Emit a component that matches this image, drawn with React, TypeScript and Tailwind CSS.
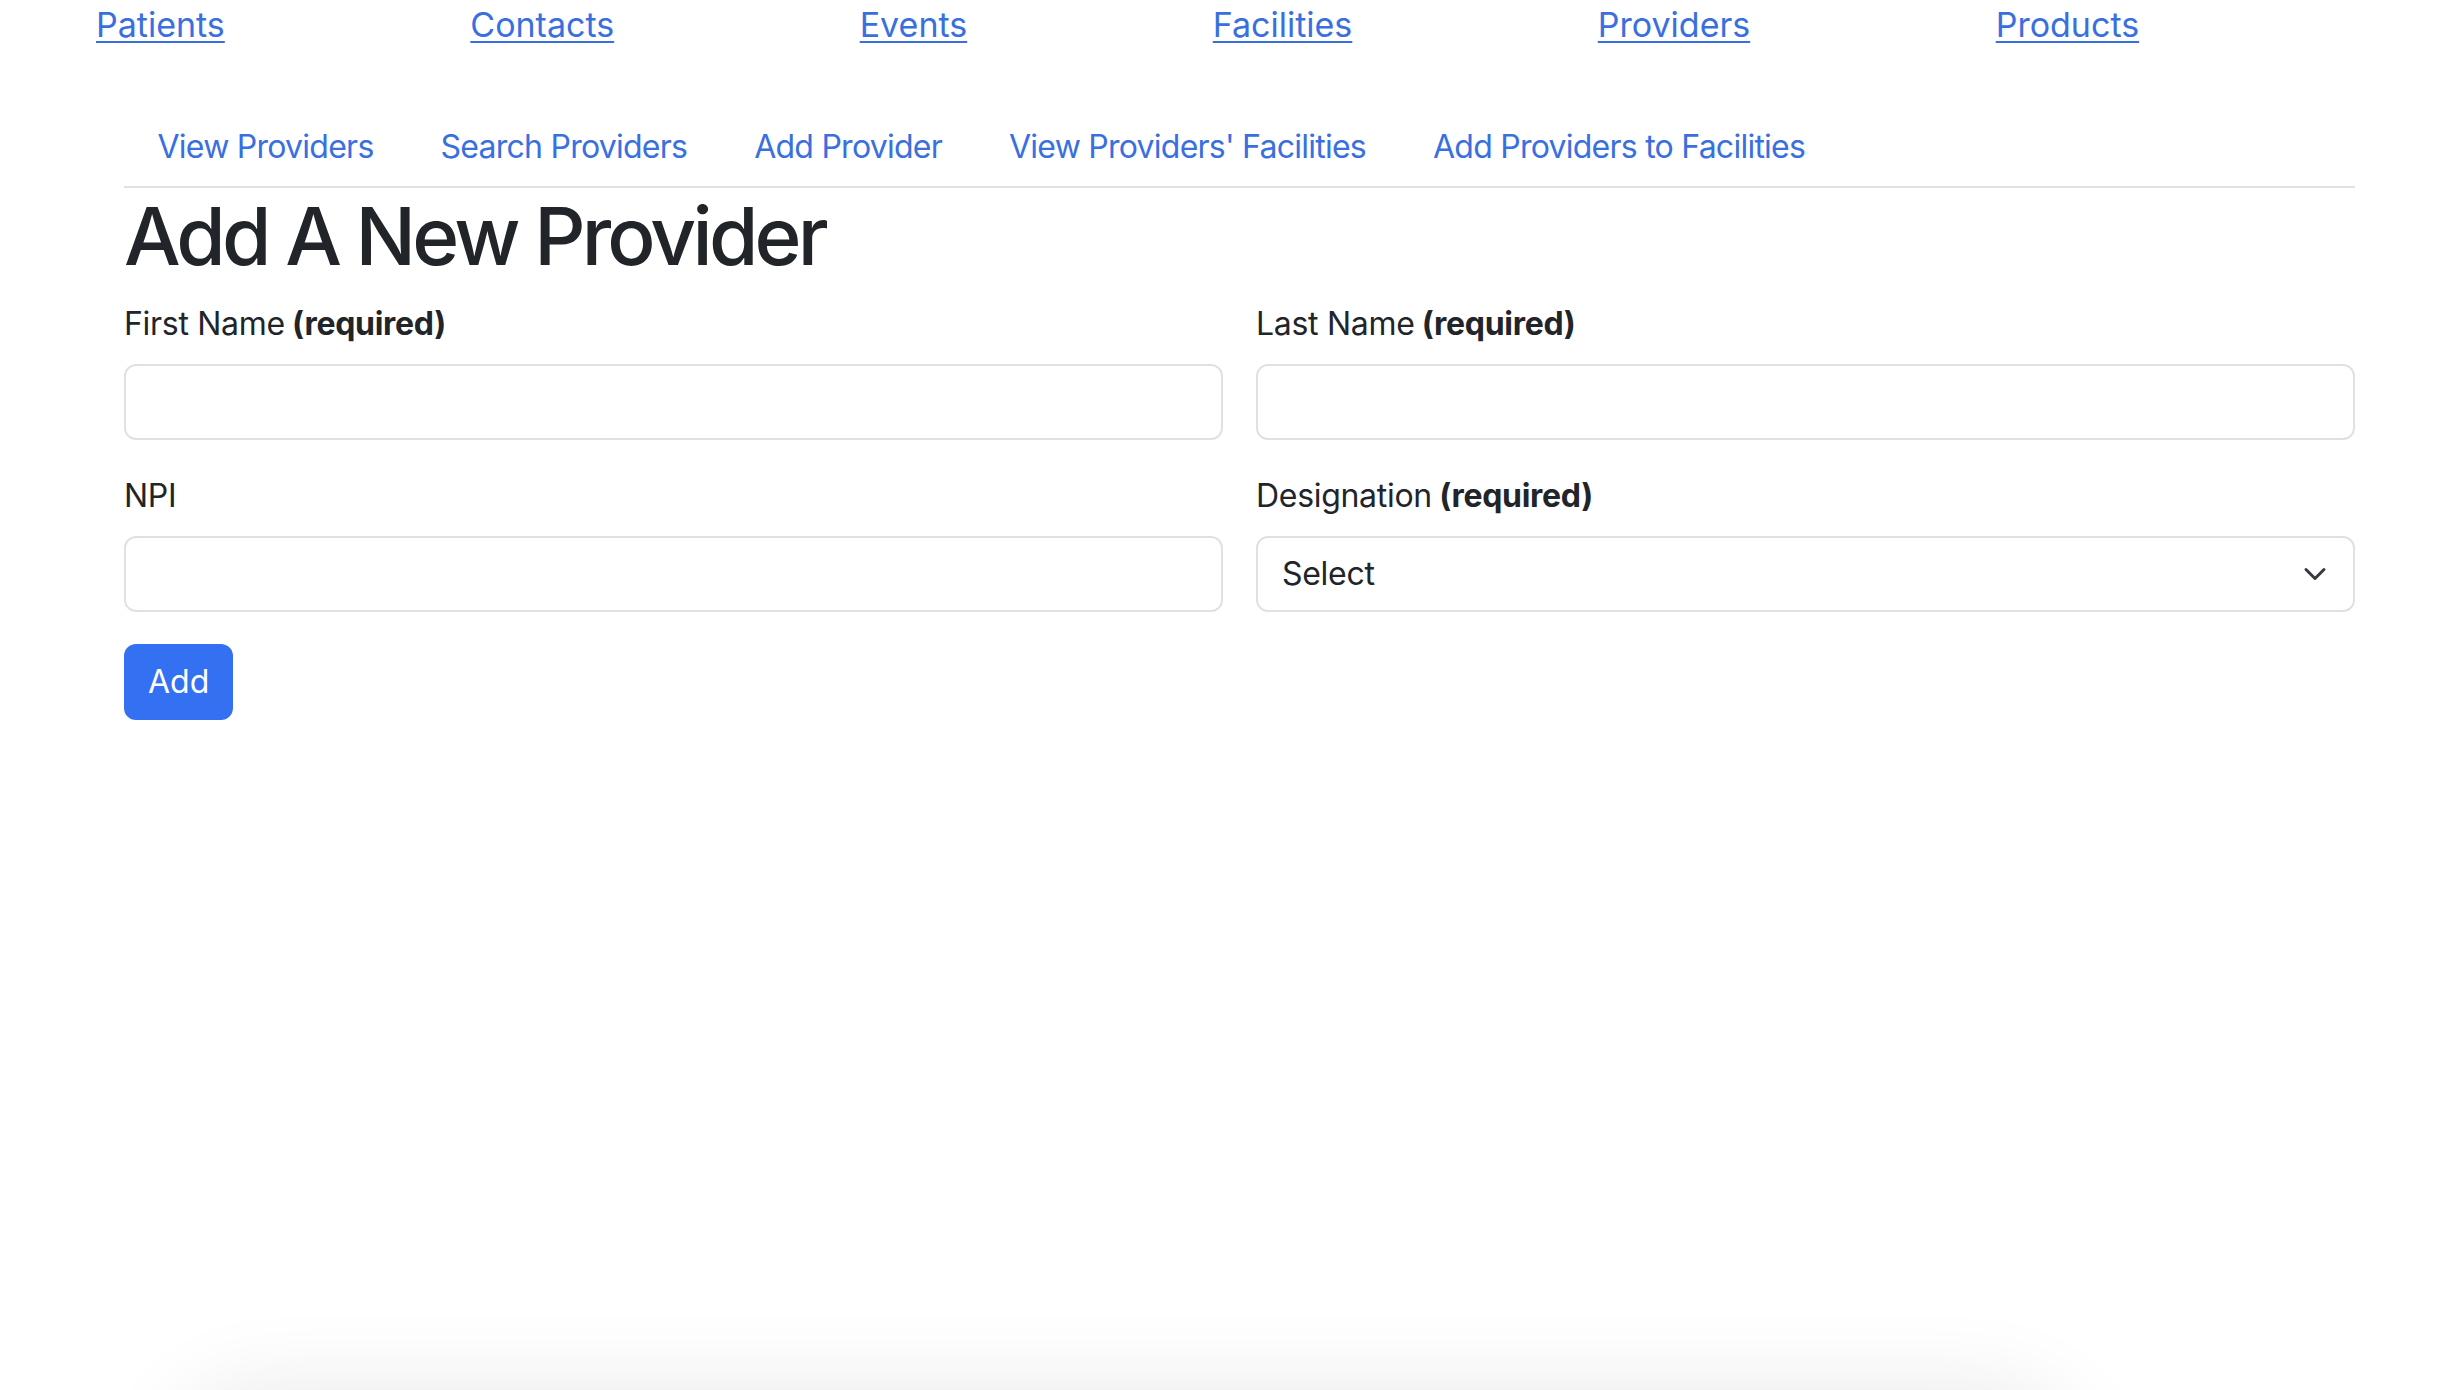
import React from "react";

const topLinks = ["Patients", "Contacts", "Events", "Facilities", "Providers", "Products"];
const subLinks = [
  "View Providers",
  "Search Providers",
  "Add Provider",
  "View Providers' Facilities",
  "Add Providers to Facilities",
];

function Label({ text, required }: { text: string; required?: boolean }) {
  return (
    <label className="block text-[32px] leading-[48px] mb-[16px] text-[#212529] tracking-[-0.3px]">
      {text}
      {required && <strong className="font-bold"> (required)</strong>}
    </label>
  );
}

function TextInput() {
  return (
    <input
      type="text"
      className="block w-full h-[76px] border-2 border-[#dee2e6] rounded-[12px] bg-white px-[24px] text-[32px] outline-none"
    />
  );
}

export default function App() {
  return (
    <div
      className="relative min-h-[1390px] bg-white text-[#212529] overflow-hidden"
      style={{ fontFamily: "Inter, 'Noto Sans', sans-serif" }}
    >
      <nav className="flex pl-[96px] pt-[4px] gap-[245.5px] text-[34px] leading-[41px]">
        {topLinks.map((l) => (
          <a
            key={l}
            href="#"
            className="text-[#3a6fe0] underline decoration-[2px] underline-offset-[4px]"
          >
            {l}
          </a>
        ))}
      </nav>

      <div className="pl-[124px] pr-[103px]">
        <ul className="mt-[61px] flex border-b-2 border-[#dee2e6]">
          {subLinks.map((l) => (
            <li key={l}>
              <a
                href="#"
                className="block px-[33.5px] pt-[17px] pb-[15px] text-[32px] leading-[48px] text-[#3a6fe0] tracking-[-0.75px]"
              >
                {l}
              </a>
            </li>
          ))}
        </ul>

        <h1 className="text-[80px] leading-[96px] font-medium mb-[16px] tracking-[-3.8px]">Add A New Provider</h1>

        <div className="grid grid-cols-2 gap-x-[33px] gap-y-[32px]">
          <div>
            <Label text="First Name" required />
            <TextInput />
          </div>
          <div>
            <Label text="Last Name" required />
            <TextInput />
          </div>
          <div>
            <Label text="NPI" />
            <TextInput />
          </div>
          <div>
            <Label text="Designation" required />
            <div className="flex items-center justify-between w-full h-[76px] border-2 border-[#dee2e6] rounded-[12px] bg-white pl-[24px] pr-[26px] text-[32px] leading-[48px] tracking-[-0.3px]">
              <span>Select</span>
              <svg width="24" height="24" viewBox="0 0 16 16" fill="none">
                <path
                  d="M2 5l6 6 6-6"
                  stroke="#343a40"
                  strokeWidth="2"
                  strokeLinecap="round"
                  strokeLinejoin="round"
                />
              </svg>
            </div>
          </div>
        </div>

        <button className="mt-[32px] h-[76px] px-[24px] rounded-[12px] bg-[#3470f2] text-white text-[32px] leading-[48px]">
          Add
        </button>
      </div>

      <div className="fixed left-[200px] w-[1850px] top-[1420px] h-[120px] rounded-full bg-white shadow-[0_0_90px_30px_rgba(0,0,0,0.09)]" />
    </div>
  );
}
